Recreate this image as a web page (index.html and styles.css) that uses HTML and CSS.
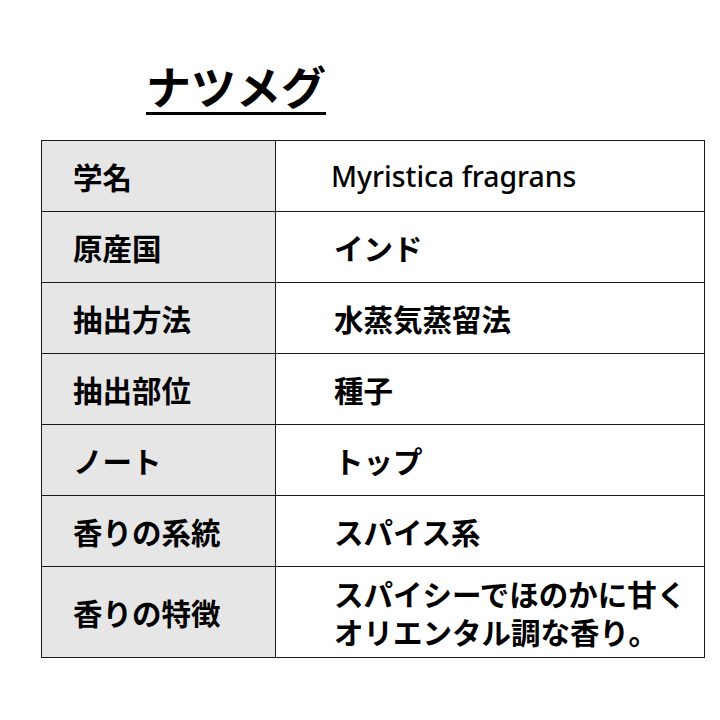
FILE: index.html
```html
<!DOCTYPE html>
<html lang="ja">
<head>
<meta charset="utf-8">
<link rel="stylesheet" href="styles.css">
</head>
<body>
<div class="page">
  <h1 class="title">ナツメグ</h1>
  <table class="info">
    <tr><th>学名</th><td class="latin">Myristica fragrans</td></tr>
    <tr><th>原産国</th><td>インド</td></tr>
    <tr><th>抽出方法</th><td>水蒸気蒸留法</td></tr>
    <tr><th>抽出部位</th><td>種子</td></tr>
    <tr><th>ノート</th><td>トップ</td></tr>
    <tr><th>香りの系統</th><td>スパイス系</td></tr>
    <tr class="tall"><th>香りの特徴</th><td>スパイシーでほのかに甘く<br>オリエンタル調な香り。</td></tr>
  </table>
</div>
</body>
</html>
```
FILE: styles.css
```css
html, body {
  margin: 0;
  padding: 0;
  background: #ffffff;
}
body {
  font-family: "Noto Sans CJK JP", "Noto Sans", sans-serif;
  color: #000;
}
.page {
  width: 720px;
  height: 720px;
  padding-top: 56px;
  box-sizing: border-box;
}
.title {
  margin: 0 0 0 146px;
  font-size: 45px;
  font-weight: 700;
  line-height: 60px;
  height: 60px;
  display: inline-block;
  text-decoration: underline;
  text-decoration-thickness: 3px;
  text-underline-offset: 7px;
}
.info {
  margin: 24px 0 0 41px;
  border-collapse: collapse;
  width: 664px;
}
.info th, .info td {
  border: 1.5px solid #1a1a1a;
  height: 70px;
  padding: 0;
  font-size: 29.5px;
  font-weight: 700;
  text-align: left;
  vertical-align: middle;
  line-height: 38px;
}
.info th {
  width: 234px;
  background: #e7e6e6;
  padding-left: 31px;
  box-sizing: border-box;
}
.info td {
  padding-left: 58px;
}
.info td.latin {
  font-family: "Noto Sans", sans-serif;
  font-size: 28.4px;
  font-weight: 500;
  padding-left: 55px;
}
.info tr.tall th, .info tr.tall td {
  height: 90px;
}
```
